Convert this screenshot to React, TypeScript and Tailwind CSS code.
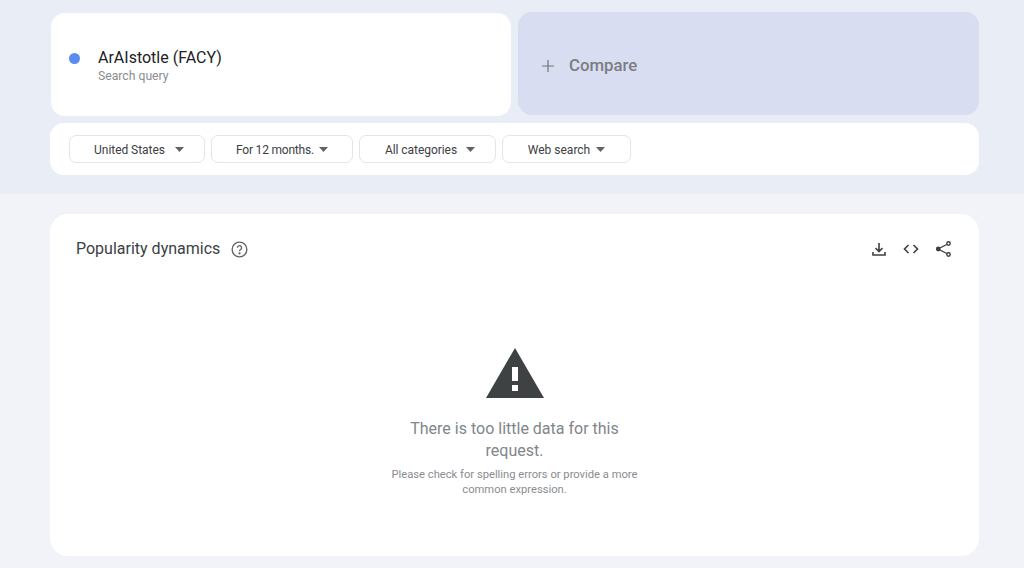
export default function App() {
  const filters = [
    { label: "United States", w: "w-[136px]", gap: "gap-[10px]", t: "tracking-[-0.05px]", p: "pl-[4px]" },
    { label: "For 12 months.", w: "w-[142px]", gap: "gap-[5px]", t: "tracking-[-0.2px]", p: "pl-0" },
    { label: "All categories", w: "w-[137px]", gap: "gap-[9px]", t: "tracking-[-0.05px]", p: "pl-[5px]" },
    { label: "Web search", w: "w-[129px]", gap: "gap-[6px]", t: "tracking-normal", p: "pl-0" },
  ];
  return (
    <div className="w-[1024px] h-[568px] overflow-hidden bg-[#f1f3f8] font-['Roboto',sans-serif]">
      <div className="h-[194px] bg-[#e9edf6] pt-3 pl-[50px] pr-[45px] flex flex-col">
        <div className="flex gap-[7px] h-[104px]">
          <div className="w-[460px] h-[103px] mt-px ml-px bg-white rounded-[14px] flex flex-col justify-center pl-[18px] pt-[3px]">
            <div className="flex items-center">
              <div className="w-[11px] h-[11px] rounded-full bg-[#5a8cf0]" />
              <div className="ml-[18px] text-[16px] leading-[20px] text-[#202124]">ArAIstotle (FACY)</div>
            </div>
            <div className="ml-[29px] text-[12.2px] leading-[16px] text-[#8a8d91]">Search query</div>
          </div>
          <div className="w-[461px] h-[103px] bg-[#d8ddf1] rounded-[14px] flex items-center pl-[24px] pt-[5px]">
            <svg width="12" height="12" viewBox="0 0 12 12" fill="none" stroke="#70757a" strokeWidth="1.2">
              <path d="M6 0v12M0 6h12" />
            </svg>
            <span className="ml-[15px] text-[16.8px] font-medium text-[#7a7e83]">Compare</span>
          </div>
        </div>
        <div className="mt-[7px] h-[52px] w-[929px] bg-white rounded-[14px] flex items-center pl-[19px] gap-[6px]">
          {filters.map((f) => (
            <div
              key={f.label}
              className={`${f.w} ${f.gap} ${f.t} ${f.p} h-[28px] rounded-[7px] border border-[#e3e5e8] flex items-center justify-center text-[12px] text-[#3c4043]`}
            >
              <span className="pt-[2px]">{f.label}</span>
              <svg width="9" height="5" viewBox="0 0 9 5" fill="#5f6368">
                <path d="M0 0h9L4.5 5z" />
              </svg>
            </div>
          ))}
        </div>
      </div>
      <div className="ml-[50px] mt-5 w-[929px] h-[342px] bg-white rounded-[18px] flex flex-col">
        <div className="flex items-center h-[70px] pl-[26px] pr-[27px]">
          <span className="text-[16px] text-[#3c4043]">Popularity dynamics</span>
          <svg className="ml-[11px]" width="17" height="17" viewBox="0 0 18 18" fill="none" stroke="#5f6368" strokeWidth="1.4">
            <circle cx="9" cy="9" r="7.8" />
            <path d="M6.8 7.2a2.2 2.2 0 1 1 3.4 1.8c-.8.5-1.2 1-1.2 1.9" />
            <circle cx="9" cy="13.2" r=".5" fill="#5f6368" />
          </svg>
          <div className="ml-auto flex items-center gap-[14px]">
            <svg width="18" height="18" viewBox="0 0 18 18" fill="none" stroke="#3c4043" strokeWidth="1.6">
              <path d="M9 3v8M5.5 8 9 11.5 12.5 8M3 12v3h12v-3" />
            </svg>
            <svg width="18" height="18" viewBox="0 0 18 18" fill="none" stroke="#3c4043" strokeWidth="1.6">
              <path d="M6.5 5 2.5 9l4 4M11.5 5l4 4-4 4" />
            </svg>
            <svg width="18" height="18" viewBox="0 0 18 18" fill="#3c4043" stroke="#3c4043" strokeWidth="1.4">
              <circle cx="14.5" cy="3.5" r="1.7" fill="none" />
              <circle cx="4.3" cy="9" r="1.7" />
              <circle cx="14.5" cy="14.5" r="1.7" fill="none" />
              <path d="M6 8 12.7 4.5M6 10 12.7 13.5" />
            </svg>
          </div>
        </div>
        <div className="flex flex-col items-center mt-[63px]">
          <svg width="60" height="52" viewBox="0 0 60 52">
            <path fillRule="evenodd" fill="#3f4242" d="M30 1 59 51H1zM27 20v14h6V20zM27 38v6h6v-6z" />
          </svg>
          <div className="mt-[19px] w-[240px] text-center text-[16px] leading-[22px] text-[#80868b]">
            There is too little data for this request.
          </div>
          <div className="mt-[5px] w-[270px] text-center text-[11.2px] leading-[15px] text-[#8a8d91]">
            Please check for spelling errors or provide a more common expression.
          </div>
        </div>
      </div>
    </div>
  );
}
